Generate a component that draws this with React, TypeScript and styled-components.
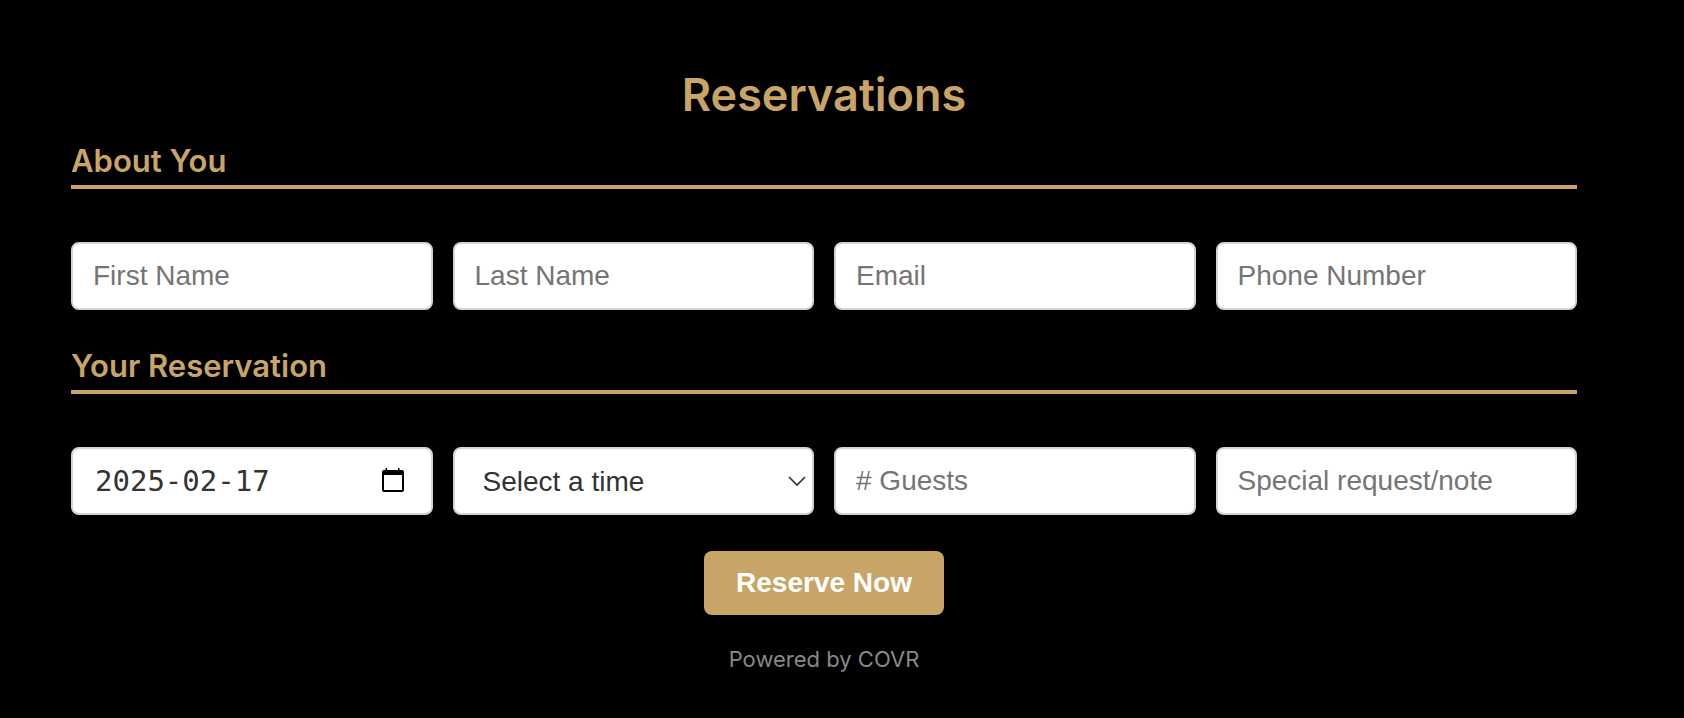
import React from "react";
import styled, { createGlobalStyle } from "styled-components";

const gold = "#c8a567";
const sans = '"Liberation Sans", Arial, sans-serif';

const GlobalStyle = createGlobalStyle`
  *, *::before, *::after { box-sizing: border-box; }
  body {
    margin: 0;
    background: #000;
    color: ${gold};
    font-family: Inter, sans-serif;
  }
`;

const Page = styled.main`
  min-height: 100vh;
  padding: 65px 107px 40px 71px;
`;

const Form = styled.form`
  display: flex;
  flex-direction: column;
`;

const Title = styled.h1`
  margin: 0 0 16px;
  font-size: 45px;
  line-height: 60px;
  font-weight: 600;
  text-align: center;
`;

const Section = styled.section`
  margin-bottom: 36px;
`;

const SectionTitle = styled.h2`
  margin: 0 0 53px;
  padding-bottom: 4px;
  border-bottom: 4px solid ${gold};
  font-size: 31px;
  line-height: 40px;
  font-weight: 600;
`;

const Fields = styled.div`
  display: grid;
  grid-template-columns: repeat(4, minmax(0, 1fr));
  gap: 20px;
`;

const Field = styled.div`
  display: flex;
  align-items: center;
  height: 68px;
  border: 2px solid #ced4da;
  border-radius: 8px;
  background: #fff;
  overflow: hidden;
`;

const Input = styled.input<{ $mono?: boolean }>`
  flex: 1;
  min-width: 0;
  height: 100%;
  padding: 0 ${(p) => (p.$mono ? 22 : 20)}px;
  border: 0;
  outline: 0;
  background: transparent;
  color: #333;
  font-family: ${(p) => (p.$mono ? '"DejaVu Sans Mono", monospace' : sans)};
  font-size: ${(p) => (p.$mono ? 29 : 28)}px;

  &::placeholder {
    color: #757575;
    opacity: 1;
  }
`;

const CalendarButton = styled.button`
  display: flex;
  padding: 0;
  margin-right: 25px;
  border: 0;
  background: transparent;
  color: #000;
  cursor: pointer;
`;

const SelectField = styled(Field)`
  position: relative;
`;

const Select = styled.select`
  appearance: none;
  width: 100%;
  height: 100%;
  padding: 1px 44px 0 28px;
  border: 0;
  outline: 0;
  background: transparent;
  color: #333;
  font-family: ${sans};
  font-size: 28px;
`;

const Chevron = styled.svg`
  position: absolute;
  top: 25px;
  right: 5px;
  pointer-events: none;
`;

const Submit = styled.button`
  align-self: center;
  padding: 16px 32px;
  border: 0;
  border-radius: 8px;
  background: ${gold};
  color: #fff;
  font-family: ${sans};
  font-size: 28px;
  line-height: 32px;
  font-weight: 700;
  cursor: pointer;
`;

const Footer = styled.footer`
  margin-top: 28px;
  color: #888;
  font-size: 22px;
  line-height: 32px;
  text-align: center;
`;

export default function App() {
  const [date, setDate] = React.useState("2025-02-17");

  return (
    <>
      <GlobalStyle />
      <Page>
        <Form onSubmit={(e) => e.preventDefault()}>
          <Title>Reservations</Title>
          <Section>
            <SectionTitle>About You</SectionTitle>
            <Fields>
              <Field>
                <Input aria-label="First Name" placeholder="First Name" />
              </Field>
              <Field>
                <Input aria-label="Last Name" placeholder="Last Name" />
              </Field>
              <Field>
                <Input type="email" aria-label="Email" placeholder="Email" />
              </Field>
              <Field>
                <Input type="tel" aria-label="Phone Number" placeholder="Phone Number" />
              </Field>
            </Fields>
          </Section>
          <Section>
            <SectionTitle>Your Reservation</SectionTitle>
            <Fields>
              <Field>
                <Input
                  $mono
                  aria-label="Date"
                  value={date}
                  onChange={(e) => setDate(e.target.value)}
                />
                <CalendarButton type="button" aria-label="Choose a date">
                  <svg width="26" height="26" viewBox="0 0 26 26">
                    <path
                      fill="currentColor"
                      fillRule="evenodd"
                      d="M5.5 0H7v2h11V0h1.500v2H22a2 2 0 0 1 2 2v18a2 2 0 0 1-2 2H4a2 2 0 0 1-2-2V4a2 2 0 0 1 2-2h1.500zM4 7v15h18V7z"
                    />
                  </svg>
                </CalendarButton>
              </Field>
              <SelectField>
                <Select aria-label="Time" defaultValue="">
                  <option value="">Select a time</option>
                </Select>
                <Chevron width="20" height="14" viewBox="0 0 20 14" fill="none">
                  <path d="M2 3l8 8 8-8" stroke="#333" strokeWidth="1.7" />
                </Chevron>
              </SelectField>
              <Field>
                <Input inputMode="numeric" aria-label="Number of guests" placeholder="# Guests" />
              </Field>
              <Field>
                <Input aria-label="Special request/note" placeholder="Special request/note" />
              </Field>
            </Fields>
          </Section>
          <Submit type="submit">Reserve Now</Submit>
        </Form>
        <Footer>Powered by COVR</Footer>
      </Page>
    </>
  );
}
